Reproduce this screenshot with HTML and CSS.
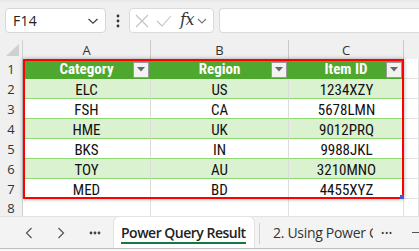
FILE: index.html
```html
<!DOCTYPE html>
<html>
<head>
<meta charset="utf-8">
<link rel="stylesheet" href="styles.css">
</head>
<body>
<div class="app">
  <div class="toolbar">
    <div class="namebox">
      <span class="nb-text">F14</span>
      <svg class="chev" width="12" height="8" viewBox="0 0 12 8"><path d="M1.5 2 L6 6.2 L10.5 2" fill="none" stroke="#444" stroke-width="1.3"/></svg>
    </div>
    <svg class="kebab" width="4" height="14" viewBox="0 0 4 14"><circle cx="2" cy="2" r="1.4" fill="#333"/><circle cx="2" cy="7" r="1.4" fill="#333"/><circle cx="2" cy="12" r="1.4" fill="#333"/></svg>
    <div class="fxbox">
      <svg width="14" height="14" viewBox="0 0 14 14"><path d="M1 1 L13 13 M13 1 L1 13" stroke="#c2c2c2" stroke-width="1.1" fill="none"/></svg>
      <svg width="16" height="14" viewBox="0 0 16 14"><path d="M1 7 L6 12 L15 2" stroke="#c2c2c2" stroke-width="1.1" fill="none"/></svg>
      <span class="fx">fx</span>
      <svg class="chev2" width="10" height="8" viewBox="0 0 10 8"><path d="M1 2 L5 6 L9 2" fill="none" stroke="#777" stroke-width="1.1"/></svg>
    </div>
    <div class="formula"></div>
  </div>

  <div class="sheet">
    <div class="hrow">
      <div class="corner"><svg width="14" height="13" viewBox="0 0 14 13"><path d="M13 0 L13 12 L0 12 Z" fill="#d0d0d0"/></svg></div>
      <div class="colhead">A</div>
      <div class="colhead">B</div>
      <div class="colhead">C</div>
      <div class="colhead last"></div>
    </div>

    <div class="body">
      <div class="rowheads">
        <div class="rowhead">1</div>
        <div class="rowhead">2</div>
        <div class="rowhead">3</div>
        <div class="rowhead">4</div>
        <div class="rowhead">5</div>
        <div class="rowhead">6</div>
        <div class="rowhead">7</div>
      </div>
      <div class="table">
        <div class="th"><span></span><span class="tht">Category</span><span class="filter"><svg width="8" height="5" viewBox="0 0 8 5"><path d="M0 0 H8 L4 4.5 Z" fill="#666"/></svg></span></div>
        <div class="th"><span></span><span class="tht">Region</span><span class="filter"><svg width="8" height="5" viewBox="0 0 8 5"><path d="M0 0 H8 L4 4.5 Z" fill="#666"/></svg></span></div>
        <div class="th"><span></span><span class="tht">Item ID</span><span class="filter"><svg width="8" height="5" viewBox="0 0 8 5"><path d="M0 0 H8 L4 4.5 Z" fill="#666"/></svg></span></div>

        <div class="td band">ELC</div><div class="td band">US</div><div class="td band lastc">1234XZY</div>
        <div class="td">FSH</div><div class="td">CA</div><div class="td lastc">5678LMN</div>
        <div class="td band">HME</div><div class="td band">UK</div><div class="td band lastc">9012PRQ</div>
        <div class="td">BKS</div><div class="td">IN</div><div class="td lastc">9988JKL</div>
        <div class="td band">TOY</div><div class="td band">AU</div><div class="td band lastc">3210MNO</div>
        <div class="td lastr">MED</div><div class="td lastr">BD</div><div class="td lastc lastr">4455XYZ</div>
      </div>
      <div class="colD">
        <div class="cell"></div><div class="cell"></div><div class="cell"></div><div class="cell"></div><div class="cell"></div><div class="cell"></div><div class="cell"></div>
      </div>
    </div>

    <div class="brow">
      <div class="rowhead">8</div>
      <div class="cell"></div><div class="cell"></div><div class="cell"></div><div class="cell"></div>
    </div>
  </div>

  <div class="tabbar">
    <div class="nav">
      <svg width="8" height="12" viewBox="0 0 8 12"><path d="M6.5 1 L1.5 6 L6.5 11" fill="none" stroke="#555" stroke-width="1.2"/></svg>
      <svg width="8" height="12" viewBox="0 0 8 12"><path d="M1.5 1 L6.5 6 L1.5 11" fill="none" stroke="#555" stroke-width="1.2"/></svg>
      <svg width="12" height="4" viewBox="0 0 12 4"><circle cx="2" cy="2" r="1.4" fill="#444"/><circle cx="6" cy="2" r="1.4" fill="#444"/><circle cx="10" cy="2" r="1.4" fill="#444"/></svg>
    </div>
    <div class="tab active"><span class="tab-label">Power Query Result</span></div>
    <div class="tabsep"></div>
    <div class="tab other"><span class="tab-label2">2. Using Power Q</span></div>
    <div class="tail">
      <span class="dots">•••</span>
      <span class="dash"></span>
    </div>
  </div>
  <div class="bottom"></div>
</div>
</body>
</html>
```

FILE: styles.css
```css
* { box-sizing: border-box; }
html, body { margin: 0; padding: 0; }
body {
  width: 419px;
  height: 251px;
  overflow: hidden;
  background: #f0f0f0;
  font-family: "Open Sans", "Noto Sans", "Liberation Sans", sans-serif;
}
.app { width: 419px; height: 251px; display: flex; flex-direction: column; overflow: hidden; }

.toolbar {
  height: 40px;
  flex: none;
  display: flex;
  align-items: flex-start;
  padding: 6px 0 0 5px;
  background: #f0f0f0;
  border-top: 2px solid #e9e9e9;
}
.namebox {
  width: 101px;
  height: 25px;
  background: #fff;
  border: 1px solid #d6d6d6;
  border-radius: 4px;
  display: flex;
  align-items: center;
  justify-content: space-between;
  padding: 0 6px 0 7px;
}
.nb-text { font-size: 14px; color: #222; letter-spacing: 0.2px; }
.chev { margin-top: 1px; }
.kebab { margin: 6px 0 0 10px; }
.fxbox {
  margin-left: 9px;
  width: 85px;
  height: 25px;
  background: #fff;
  border: 1px solid #dadada;
  border-radius: 4px;
  display: flex;
  align-items: center;
  padding: 0 0 0 5px;
  gap: 7px;
}
.fx {
  font-family: "DejaVu Serif", "Liberation Serif", serif;
  font-style: italic;
  font-size: 16px;
  color: #333;
  margin-left: 1px;
  margin-top: -3px;
  letter-spacing: -0.5px;
}
.chev2 { margin-left: -4px; }
.formula {
  margin-left: 5px;
  flex: 1;
  height: 25px;
  background: #fff;
  border: 1px solid #dadada;
  border-right: none;
  border-radius: 4px 0 0 4px;
}

.sheet {
  height: 176px;
  flex: none;
  display: flex;
  flex-direction: column;
  background: #fff;
  font-family: "Liberation Sans Narrow", "Roboto Condensed", "DejaVu Sans Condensed", "Roboto", sans-serif;
}
.hrow, .brow {
  display: grid;
  grid-template-columns: 23px 128px 138px 115px 1fr;
}
.hrow { height: 19px; }
.brow { height: 17px; }
.body {
  display: grid;
  grid-template-columns: 23px 381px 1fr;
  height: 140px;
}
.rowheads, .colD {
  display: grid;
  grid-template-rows: repeat(7, 20px);
}
.corner {
  background: #f0f0f0;
  border-right: 1px solid #cfcfcf;
  display: flex;
  align-items: flex-end;
  justify-content: flex-end;
  padding: 0 2px 2px 0;
}
.colhead {
  background: #f0f0f0;
  border-right: 1px solid #c9c9c9;
  font-size: 13px;
  color: #333;
  display: flex;
  align-items: center;
  justify-content: center;
  font-family: "Open Sans", "Noto Sans", sans-serif;
}
.colhead.last { border-right: none; }
.rowhead {
  background: #f0f0f0;
  border-right: 1px solid #cfcfcf;
  font-size: 13px;
  color: #333;
  display: flex;
  align-items: center;
  justify-content: center;
  font-family: "Open Sans", "Noto Sans", sans-serif;
}
.cell {
  border-right: 1px solid #e1e1e1;
  border-bottom: 1px solid #e1e1e1;
}
.table {
  position: relative;
  display: grid;
  grid-template-columns: 128px 138px 115px;
  grid-template-rows: repeat(7, 20px);
  outline: 2px solid #ff0000;
  outline-offset: -2px;
  box-shadow: 0 0 4px rgba(0,0,0,0.35);
  z-index: 2;
}
.table::after {
  content: "";
  position: absolute;
  right: 0;
  bottom: 0;
  width: 4px;
  height: 4px;
  background: #3b5bd0;
}
.th {
  background: #4ea72e;
  display: grid;
  grid-template-columns: 17px 1fr 17px;
  align-items: center;
  padding-right: 1px;
  color: #fff;
  font-weight: bold;
  font-size: 15px;
}
.tht { text-align: center; }
.filter {
  width: 16px;
  height: 16px;
  background: #f2f2f2;
  border: 1px solid #9a9a9a;
  display: flex;
  align-items: center;
  justify-content: center;
  margin-top: 1px;
}
.td {
  font-size: 15px;
  color: #111;
  display: flex;
  align-items: center;
  justify-content: center;
  padding-top: 2px;
  border-bottom: 1px solid #8ed973;
  border-right: 1px solid #dcdcdc;
  background: #fff;
}
.td.band { background: #daf2d0; }
.td.lastc { border-right: none; }
.td.lastr { border-bottom: none; }

.tabbar {
  height: 32px;
  flex: none;
  display: grid;
  grid-template-columns: 113px 142px 5px 113px 46px;
  background: #f3f3f3;
  border-top: 1px solid #e3e3e3;
  font-family: "Open Sans", "Noto Sans", sans-serif;
  overflow: hidden;
}
.nav {
  display: flex;
  align-items: center;
  padding-left: 25px;
  gap: 24px;
}
.tab {
  display: flex;
  align-items: center;
  min-width: 0;
}
.tab.active {
  background: #fff;
  padding-left: 7px;
  border-radius: 6px 6px 0 0;
  border: 1px solid #e3e3e3;
  border-bottom: none;
  margin-top: -1px;
  overflow: hidden;
}
.tab-label {
  font-size: 14px;
  font-weight: 600;
  color: #222;
  border-bottom: 2px solid #107c41;
  line-height: 19px;
  padding-top: 2px;
  white-space: nowrap;
  letter-spacing: -0.5px;
}
.tabsep {
  width: 1px;
  justify-self: end;
  background: #cfcfcf;
  margin: 6px 0 4px 0;
}
.tab.other {
  padding-left: 13px;
  overflow: hidden;
}
.tab-label2 {
  font-size: 14px;
  color: #333;
  white-space: nowrap;
  letter-spacing: -0.3px;
  display: block;
  width: 100px;
  overflow: hidden;
}
.tail {
  display: flex;
  align-items: center;
  padding-left: 8px;
  min-width: 0;
  overflow: hidden;
}
.dots {
  font-size: 9px;
  color: #333;
  letter-spacing: 0.5px;
  line-height: 1;
}
.dash {
  flex: none;
  width: 8px;
  height: 1px;
  background: #555;
  margin-left: 19px;
}
.bottom {
  flex: 1;
  background: #f7f7f7;
  border-top: 1px solid #bdbdbd;
}
```
